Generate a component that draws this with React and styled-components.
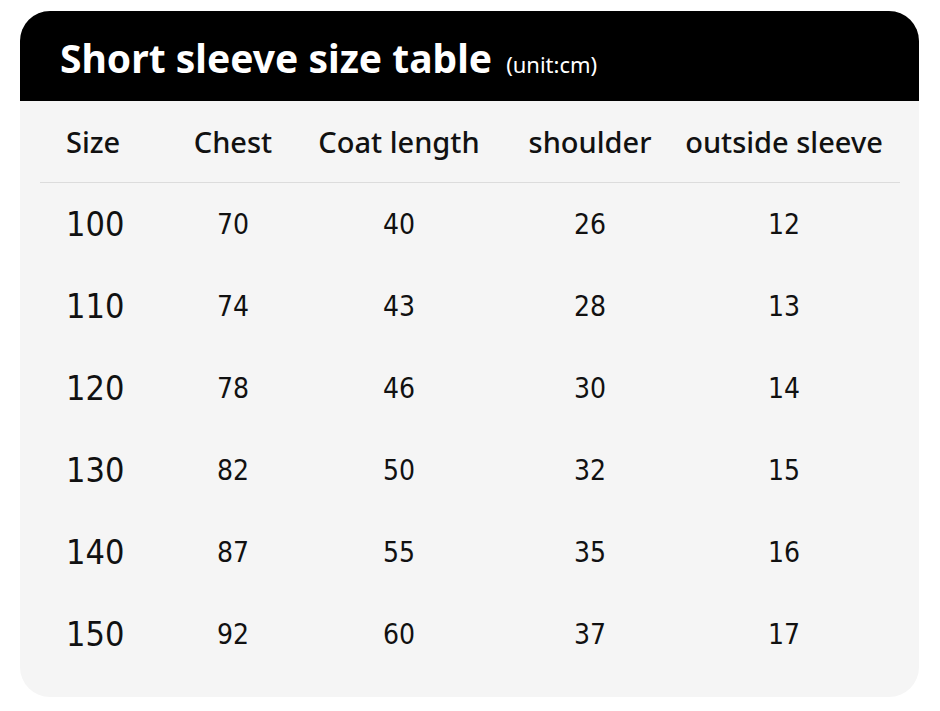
import styled, { createGlobalStyle } from "styled-components";

const GlobalStyle = createGlobalStyle`
  html, body {
    margin: 0;
    padding: 0;
    background: #ffffff;
  }
`;

const columns = "84px 166px 166px 216px 172px";

const rows = [
  ["100", "70", "40", "26", "12"],
  ["110", "74", "43", "28", "13"],
  ["120", "78", "46", "30", "14"],
  ["130", "82", "50", "32", "15"],
  ["140", "87", "55", "35", "16"],
  ["150", "92", "60", "37", "17"],
];

const App = () => {
  return (
    <>
      <GlobalStyle />
      <Page>
        <Card>
          <Banner>
            <Title>Short sleeve size table</Title>
            <Unit>(unit:cm)</Unit>
          </Banner>
          <Table>
            <HeadRow>
              <HeadCell $first>Size</HeadCell>
              <HeadCell>Chest</HeadCell>
              <HeadCell>Coat length</HeadCell>
              <HeadCell>shoulder</HeadCell>
              <HeadCell>outside sleeve</HeadCell>
            </HeadRow>
            {rows.map((r) => (
              <Row key={r[0]}>
                <SizeCell>{r[0]}</SizeCell>
                {r.slice(1).map((v, i) => (
                  <ValueCell key={i}>{v}</ValueCell>
                ))}
              </Row>
            ))}
          </Table>
        </Card>
      </Page>
    </>
  );
};
export default App;

const Page = styled.div`
  width: 940px;
  height: 711px;
  padding: 11px 21px 0 20px;
  box-sizing: border-box;
`;
const Card = styled.div`
  width: 899px;
  height: 686px;
  background-color: #f5f5f5;
  border-radius: 30px;
  overflow: hidden;
  display: flex;
  flex-direction: column;
`;
const Banner = styled.div`
  height: 90px;
  background-color: #000000;
  display: flex;
  flex-direction: row;
  align-items: baseline;
  padding: 25px 0 0 40px;
  box-sizing: border-box;
  gap: 14px;
`;
const Title = styled.div`
  color: #ffffff;
  font-family: "Noto Sans", sans-serif;
  font-size: 39px;
  font-weight: 700;
  line-height: 44px;
`;
const Unit = styled.div`
  color: #ffffff;
  font-family: "Noto Sans", sans-serif;
  font-size: 22px;
  line-height: 26px;
`;
const Table = styled.div`
  display: flex;
  flex-direction: column;
  margin: 0 19px 0 20px;
`;
const HeadRow = styled.div`
  display: grid;
  grid-template-columns: ${columns};
  height: 82px;
  align-items: center;
  padding-left: 26px;
  border-bottom: 1px solid #dcdcdc;
  box-sizing: border-box;
`;
const HeadCell = styled.div`
  display: flex;
  justify-content: ${(p) => (p.$first ? "flex-start" : "center")};
  color: #111111;
  font-family: "Noto Sans", sans-serif;
  font-size: 29px;
  font-weight: 500;
  white-space: nowrap;
`;
const Row = styled.div`
  display: grid;
  grid-template-columns: ${columns};
  height: 82px;
  align-items: center;
  padding-left: 26px;
`;
const SizeCell = styled.div`
  color: #111111;
  font-family: "DejaVu Sans Condensed", "DejaVu Sans", sans-serif;
  font-size: 34px;
  text-align: left;
`;
const ValueCell = styled.div`
  color: #111111;
  font-family: "DejaVu Sans Condensed", "DejaVu Sans", sans-serif;
  font-size: 28px;
  text-align: center;
`;
